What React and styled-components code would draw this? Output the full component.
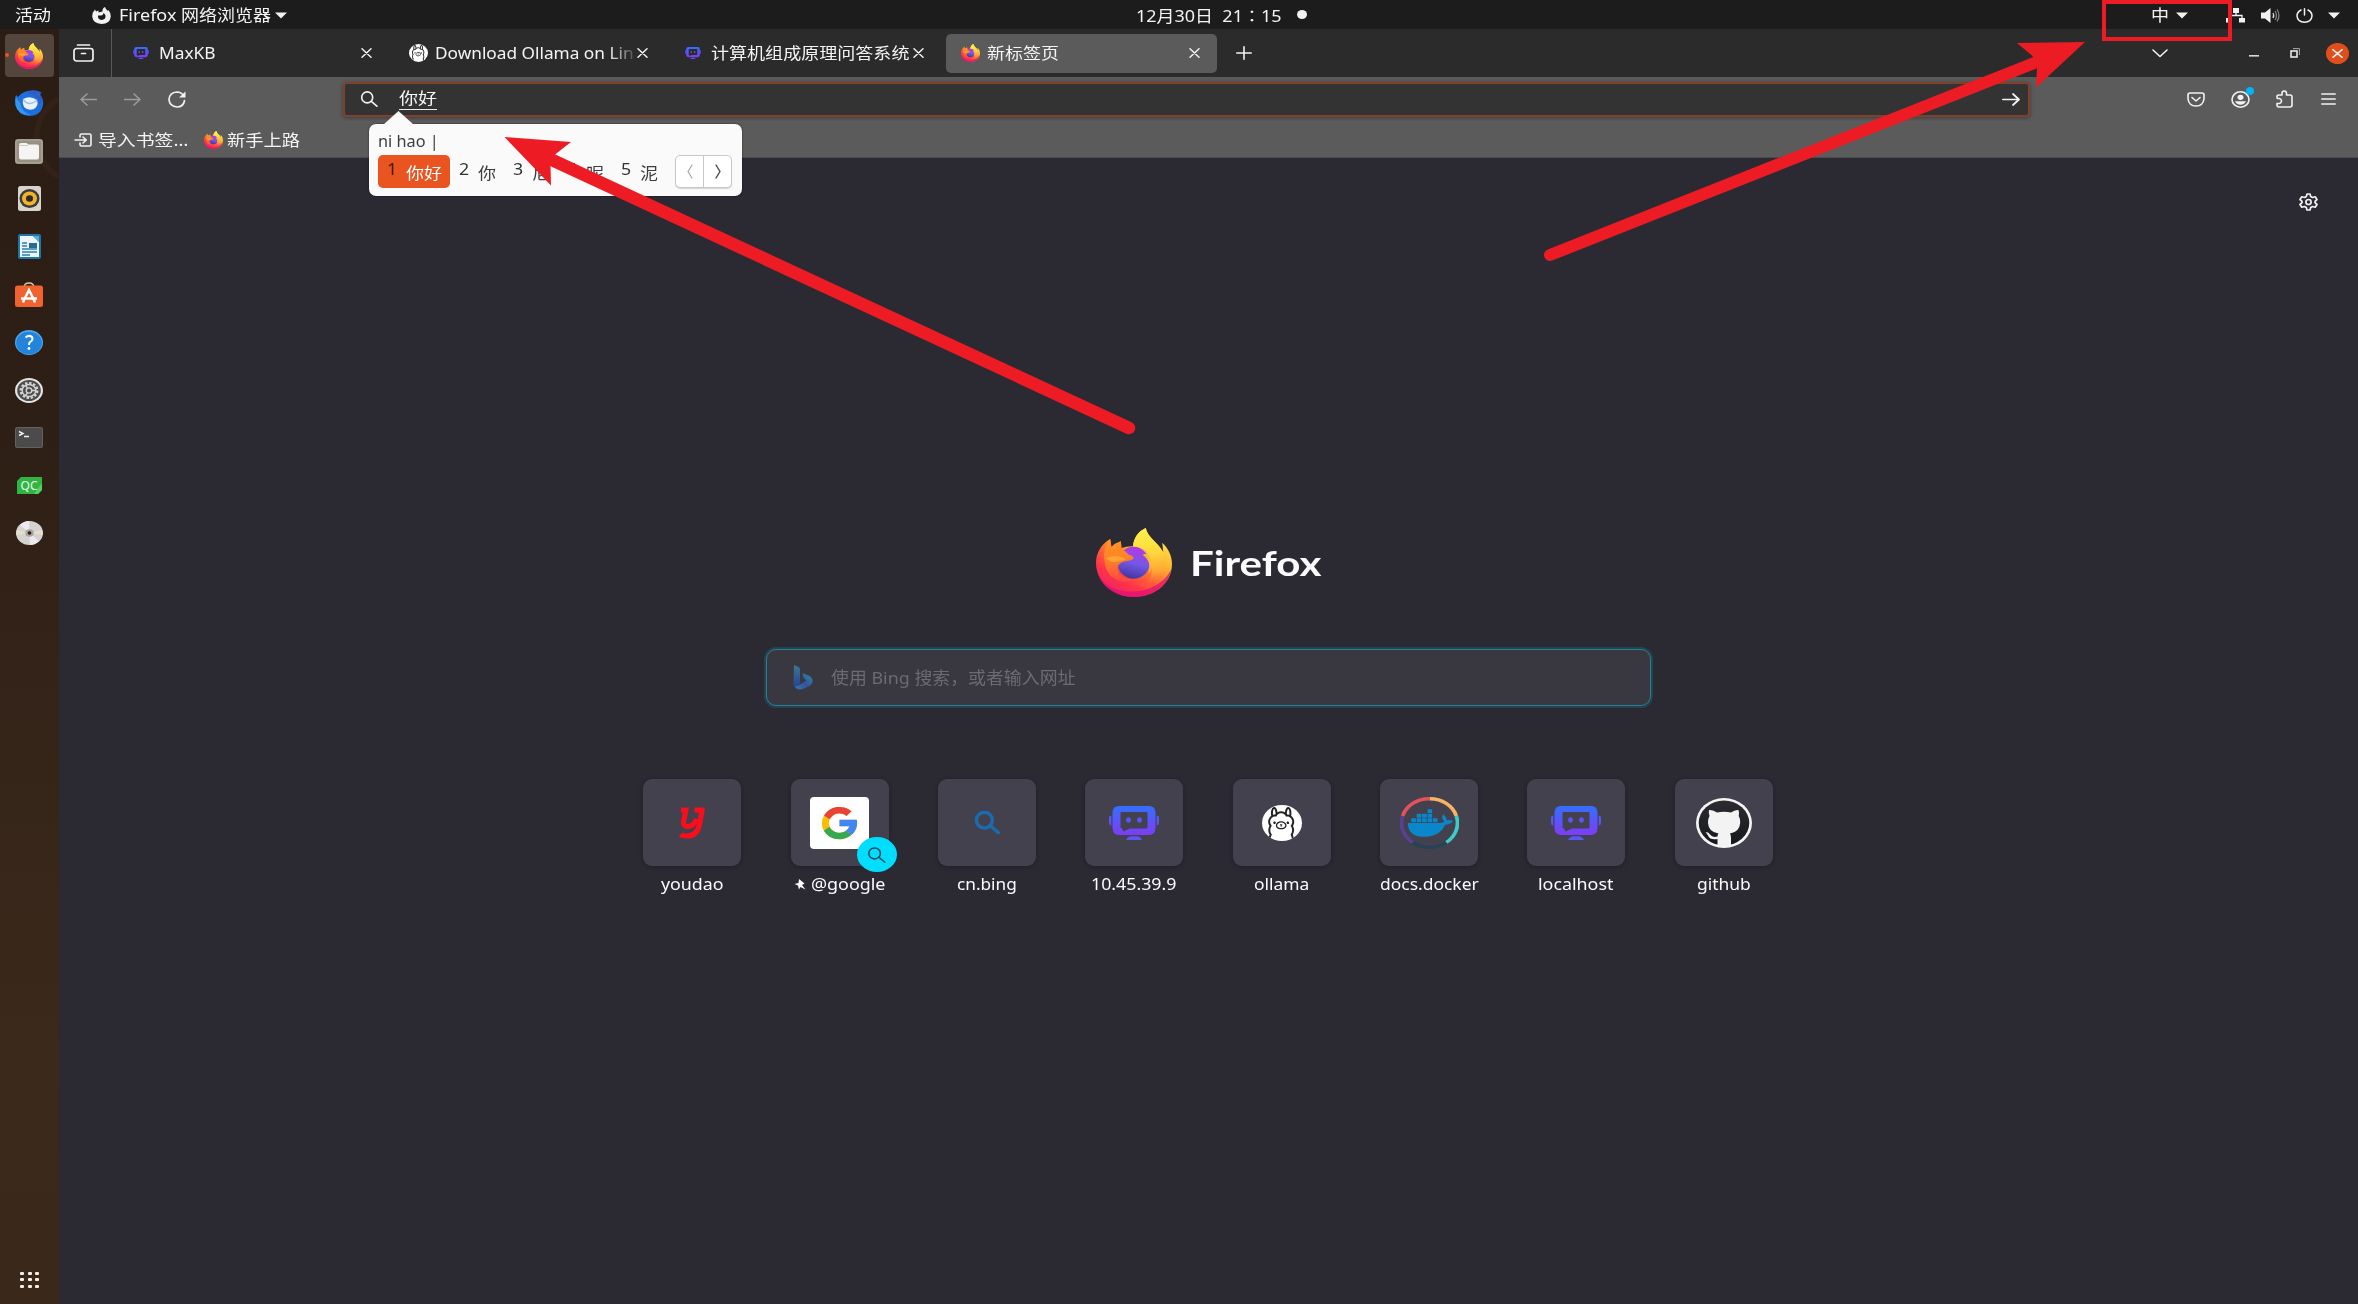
import React, { useLayoutEffect, useRef, useState } from 'react';
import styled, { createGlobalStyle } from 'styled-components';
import { SiOllama } from 'react-icons/si';

const GlobalStyle = createGlobalStyle`
  * { box-sizing: border-box; }
  html, body { margin: 0; padding: 0; background: #2b2a33; overflow: hidden; }
  body { font-family: "Noto Sans", "Noto Sans CJK SC", sans-serif; color: #f4f4f4; }
  svg { display: block; flex: none; }
`;

/* ---------- text fitted to a fixed advance ---------- */
const FitBox = styled.span`
  display: block;
  flex: none;
  width: ${p => p.$w}px;
  line-height: 1;
  font-size: ${p => p.$size}px;
  font-weight: ${p => p.$weight || 400};
  font-family: ${p => p.$family || 'inherit'};
  color: ${p => p.$color || '#f4f4f4'};
  white-space: nowrap;
`;
const FitInner = styled.span`
  display: inline-block;
  line-height: 20px;
  transform-origin: 0 50%;
`;
function Fit({ w, size = 15, children, ...rest }) {
  const ref = useRef(null);
  const [scale, setScale] = useState(1);
  useLayoutEffect(() => {
    const n = ref.current.offsetWidth;
    if (n) setScale(w / n);
  }, [w, size, children]);
  return (
    <FitBox $w={w} $size={size} $weight={rest.weight} $color={rest.color} $family={rest.family}>
      <FitInner ref={ref} style={{ transform: `scaleX(${scale})` }}>{children}</FitInner>
    </FitBox>
  );
}

/* ---------- layout ---------- */
const Screen = styled.div`
  position: relative;
  display: flex;
  flex-direction: column;
  width: 2358px;
  height: 1304px;
  overflow: hidden;
`;
const TopBar = styled.header`
  display: flex;
  align-items: center;
  flex: none;
  height: 29px;
  padding: 1px 18px 0 15px;
  background: #1c1c1c;
`;
const MidColon = styled.span`
  font-family: "Noto Sans CJK TC", sans-serif;
`;
const Spacer = styled.div`
  flex: ${p => (p.$w ? 'none' : 1)};
  width: ${p => (p.$w ? p.$w + 'px' : 'auto')};
`;
const NoticeDot = styled.span`
  width: 10px;
  height: 9px;
  margin: 0 0 1px 15px;
  border-radius: 50%;
  background: #f2f2f2;
`;
const Body = styled.div`
  display: flex;
  flex: 1;
  min-height: 0;
`;
const Dock = styled.nav`
  position: relative;
  display: flex;
  flex-direction: column;
  align-items: center;
  flex: none;
  width: 59px;
  padding: 5px 1px 0 0;
  background: linear-gradient(#2b1d14, #2e1f16 30%, #3b291b 80%, #3a281b);
`;
const DockRing = styled.svg`
  position: absolute;
  left: 0;
  top: 0;
`;
const DockItem = styled.div`
  position: relative;
  display: flex;
  align-items: center;
  justify-content: center;
  flex: none;
  width: 49px;
  height: 43px;
  margin-bottom: 4.8px;
  border-radius: 4px;
  background: ${p => (p.$active ? '#54463d' : 'transparent')};
`;
const RunDot = styled.span`
  position: absolute;
  left: 5px;
  top: 24px;
  width: 4px;
  height: 4px;
  border-radius: 50%;
  background: #e95420;
`;
const AppsGrid = styled.div`
  display: grid;
  grid-template-columns: repeat(3, 4px);
  grid-auto-rows: 3px;
  gap: 3.5px;
  margin: auto 0 16.5px 1px;
`;
const AppsDot = styled.span`
  border-radius: 1px;
  background: #f3eee9;
`;
const Win = styled.main`
  display: flex;
  flex-direction: column;
  flex: 1;
  min-width: 0;
`;
const TabStrip = styled.div`
  display: flex;
  align-items: center;
  flex: none;
  height: 48px;
  padding-right: 9px;
  background: #2b2b2b;
`;
const ViewCell = styled.div`
  display: flex;
  align-items: center;
  width: 53px;
  height: 48px;
  padding-left: 14px;
  margin-right: 6px;
  border-right: 1px solid #5a5a5a;
`;
const Tab = styled.div`
  display: flex;
  align-items: center;
  width: 271px;
  height: 39px;
  margin-right: 5px;
  padding: 0 17px 0 15px;
  border-radius: 5px;
  background: ${p => (p.$active ? '#5b5b5b' : 'transparent')};
`;
const TabIcon = styled.span`
  display: flex;
  align-items: center;
  width: 25.5px;
`;
const TabTitle = styled.span`
  flex: 1;
  min-width: 0;
  overflow: hidden;
  ${p => p.$fade && 'mask-image: linear-gradient(90deg, #000 174px, transparent 204px);'}
`;
const CloseCircle = styled.span`
  display: flex;
  align-items: center;
  justify-content: center;
  width: 23px;
  height: 21px;
  border-radius: 50%;
  background: #e04f1b;
`;
const NavBar = styled.div`
  display: flex;
  align-items: center;
  flex: none;
  height: 44px;
  padding: 0 22px 0 21px;
  background: #5b5b5b;
`;
const UrlBar = styled.div`
  display: flex;
  align-items: center;
  width: 1687px;
  height: 35px;
  padding: 0 8px 0 15px;
  border: 2px solid #7f412b;
  border-radius: 4px;
  background: #333333;
  box-shadow: 0 1px 4px rgba(0, 0, 0, 0.35);
`;
const Composing = styled.span`
  display: block;
  height: 22px;
  padding-top: 0;
  border-bottom: 1.5px solid #eee;
`;
const Account = styled.span`
  position: relative;
`;
const AccountDot = styled.span`
  position: absolute;
  right: -4px;
  top: -4px;
  width: 8px;
  height: 8px;
  border-radius: 50%;
  background: #00b3f4;
`;
const Bookmarks = styled.div`
  display: flex;
  align-items: center;
  flex: none;
  height: 37px;
  padding: 1px 0 0 15px;
  background: #5b5b5b;
  border-bottom: 1px solid #4b4a4f;
`;
const Page = styled.section`
  display: flex;
  flex-direction: column;
  align-items: center;
  flex: 1;
  min-height: 0;
  background: #2b2a33;
`;
const SettingsRow = styled.div`
  display: flex;
  justify-content: flex-end;
  width: 100%;
  height: 370px;
  padding: 35px 40px 0 0;
`;
const Brand = styled.div`
  display: flex;
  align-items: center;
  gap: 18px;
  height: 69px;
`;
const SearchBox = styled.div`
  display: flex;
  align-items: center;
  width: 885px;
  height: 57px;
  margin-top: 52px;
  padding-left: 26px;
  border: 1px solid #298091;
  border-radius: 10px;
  background: #393841;
  box-shadow: 0 0 0 2px #224450;
`;
const Tiles = styled.div`
  display: flex;
  gap: 49.4px;
  margin-top: 73px;
  padding-right: 1px;
`;
const Site = styled.div`
  display: flex;
  flex-direction: column;
  align-items: center;
  width: 98px;
`;
const Tile = styled.div`
  position: relative;
  display: flex;
  align-items: center;
  justify-content: center;
  width: 98px;
  height: 87px;
  border-radius: 9px;
  background: #42414d;
  box-shadow: 0 1px 4px rgba(10, 10, 20, 0.3);
`;
const SiteLabel = styled.div`
  display: flex;
  align-items: center;
  gap: 5px;
  height: 20px;
  margin-top: 8px;
`;
const WhiteCard = styled.div`
  display: flex;
  align-items: center;
  justify-content: center;
  width: 59px;
  height: 52px;
  border-radius: 4px;
  background: #fff;
`;
const SearchBadge = styled.span`
  position: absolute;
  right: -8px;
  bottom: -6px;
  display: flex;
  align-items: center;
  justify-content: center;
  width: 40px;
  height: 35px;
  border-radius: 50%;
  background: #00ddff;
`;
const RoundIcon = styled.span`
  display: flex;
  align-items: flex-end;
  justify-content: center;
  overflow: hidden;
  width: ${p => p.$w}px;
  height: ${p => p.$h}px;
  border-radius: 50%;
  background: #fff;
  color: #222;
`;
const Llama = styled(SiOllama)`
  width: ${p => p.$w}px;
  height: ${p => p.$h}px;
`;

/* ---------- input method popup ---------- */
const Popup = styled.div`
  position: absolute;
  left: 369px;
  top: 124px;
  width: 373px;
  height: 72px;
  padding: 7px 10px 0 9px;
  border-radius: 7px;
  background: #fafafa;
  box-shadow: 0 0 2px rgba(0, 0, 0, 0.6);
`;
const PopupTip = styled.svg`
  position: absolute;
  left: 14px;
  top: -13px;
`;
const Preedit = styled.div`
  height: 24px;
  padding-left: 0;
`;
const Candidates = styled.div`
  display: flex;
  align-items: center;
  height: 33px;
`;
const Candidate = styled.div`
  display: flex;
  align-items: center;
  justify-content: space-between;
  height: 33px;
  width: ${p => p.$w}px;
  margin-right: ${p => p.$mr}px;
  padding: 0 ${p => (p.$on ? '8px 0 9px' : '0')};
  border-radius: 5px;
  background: ${p => (p.$on ? '#e95420' : 'transparent')};
`;
const Digit = styled.span`
  margin-top: -5px;
`;
const Glyphs = styled.span`
  margin-top: 2px;
`;
const Pager = styled.div`
  display: flex;
  width: 57px;
  height: 33px;
  margin-left: auto;
  border: 1px solid #c8c8c8;
  border-radius: 5px;
  background: #fff;
  box-shadow: 0 1px 1px rgba(0, 0, 0, 0.15);
`;
const PageBtn = styled.span`
  display: flex;
  align-items: center;
  justify-content: center;
  flex: 1;
  & + & { border-left: 1px solid #c8c8c8; }
`;
const Marks = styled.svg`
  position: absolute;
  left: 0;
  top: 0;
`;

/* ---------- icons ---------- */
const Line = ({ w, h, vb, sw = 1.6, color = '#f2f2f2', children }) => (
  <svg width={w} height={h} viewBox={vb} preserveAspectRatio="none" fill="none" stroke={color} strokeWidth={sw} strokeLinecap="round" strokeLinejoin="round">{children}</svg>
);
const Caret = () => <svg width="12" height="7" viewBox="0 0 12 7"><path d="M0 .5h12L6 6.5z" fill="#f2f2f2" /></svg>;
const Cross = ({ w = 11, h = 10, sw = 1.5 }) => <Line w={w} h={h} vb="0 0 11 10" sw={sw}><path d="M1 .8l9 8.4M10 .8L1 9.2" /></Line>;
const Magnifier = ({ w, h, color, sw }) => <Line w={w} h={h} vb="0 0 18 16" color={color} sw={sw}><circle cx="7.2" cy="6.4" r="5.5" /><path d="M11.3 10.3l5.6 4.9" /></Line>;

let seq = 0;
function FirefoxLogo({ w, h }) {
  const [id] = useState(() => 'fx' + seq++);
  return (
    <svg width={w} height={h} viewBox="0 0 226 207" preserveAspectRatio="none">
      <defs>
        <linearGradient id={id + 'a'} x1="0.82" y1="0.15" x2="0.25" y2="0.98">
          <stop offset="0" stopColor="#ffe04a" /><stop offset=".3" stopColor="#ffb02e" /><stop offset=".52" stopColor="#ff6b35" /><stop offset=".75" stopColor="#ff3647" /><stop offset="1" stopColor="#f01f66" />
        </linearGradient>
        <linearGradient id={id + 'b'} x1="0.3" y1="0" x2="0.4" y2="1">
          <stop offset="0" stopColor="#fff14f" /><stop offset=".45" stopColor="#ffd93b" /><stop offset=".8" stopColor="#ffa435" /><stop offset="1" stopColor="#ff6a3d" stopOpacity="0" />
        </linearGradient>
        <linearGradient id={id + 'c'} x1="0.6" y1="0" x2="0.35" y2="1">
          <stop offset="0" stopColor="#b935e8" /><stop offset=".5" stopColor="#7558e6" /><stop offset="1" stopColor="#40369c" />
        </linearGradient>
        <linearGradient id={id + 'd'} x1="0.2" y1="0" x2="0.3" y2="1">
          <stop offset="0" stopColor="#ff9420" /><stop offset=".45" stopColor="#ff8427" /><stop offset="1" stopColor="#ff4a42" />
        </linearGradient>
      </defs>
      <path d="M42 33L46 57Q58 45 74 40L76 60Q92 54 110 55C112 30 126 10 148 0C152 28 186 44 200 72L197 44C216 62 226 85 226 108C226 165 175 207 113 207C50 207 0 160 0 105C0 76 14 50 42 33Z" fill={`url(#${id}a)`} />
      <path d="M2 122C14 172 60 192 112 190C165 188 208 160 224 122C216 172 170 207 113 207C55 207 8 170 2 122Z" fill="#e20f78" opacity=".75" />
      <path d="M148 0C152 28 186 44 202 78C212 120 196 160 150 172C172 150 170 100 150 84Q132 60 110 55C112 30 126 10 148 0Z" fill={`url(#${id}b)`} />
      <circle cx="112" cy="104" r="48" fill={`url(#${id}c)`} />
      <path d="M132 62C164 76 176 110 156 138C164 112 158 94 138 80L150 77Q142 68 132 62Z" fill="#ffb936" />
      <path d="M42 33L46 57Q58 45 74 40L75 59Q84 68 98 80Q110 82 112 91C106 99 92 99 80 102C64 108 62 122 66 132C72 148 92 156 112 153C90 168 50 160 34 130C20 100 20 60 42 33Z" fill={`url(#${id}d)`} />
      <path d="M30 90Q50 80 78 88L90 94Q70 104 48 102Q36 98 30 90Z" fill="#ffb03a" opacity=".75" />
    </svg>
  );
}

function Robot({ w, h }) {
  const [id] = useState(() => 'rb' + seq++);
  return (
    <svg width={w} height={h} viewBox="0 0 50 34" preserveAspectRatio="none">
      <defs><linearGradient id={id} x1="0" y1="0" x2="0" y2="1"><stop offset="0" stopColor="#3370ff" /><stop offset="1" stopColor="#7f3bf5" /></linearGradient></defs>
      <path fillRule="evenodd" fill={`url(#${id})`} d="M10 0H40Q46.500 0 46.500 7V22Q46.500 29 40 29H10Q3.500 29 3.500 22V7Q3.500 0 10 0ZM12.500 6Q11.500 6 11.500 7V21.500Q11.500 22.500 13 22.500L14.500 25.500L21 22.500H37.500Q38.500 22.500 38.500 21.500V7Q38.500 6 37.500 6Z" />
      <path fill={`url(#${id})`} d="M0 12Q0 9.500 2.300 9.500V19.500Q0 19.500 0 17ZM50 12Q50 9.500 47.700 9.500V19.500Q50 19.500 50 17Z" />
      <ellipse cx="19.500" cy="14" rx="2.400" ry="2.700" fill="#5855f7" /><ellipse cx="30.500" cy="14" rx="2.400" ry="2.700" fill="#5855f7" />
      <path d="M17 34Q19 30.300 22 30.300H28Q31 30.300 33 34Z" fill="#5b55f6" />
    </svg>
  );
}

function Ollama({ w, h }) {
  return <RoundIcon $w={w} $h={h}><Llama preserveAspectRatio="none" $w={w * 0.86} $h={h * 0.94} /></RoundIcon>;
}

const GoogleG = () => (
  <svg width="37" height="34" viewBox="3 3 42 42" preserveAspectRatio="none">
    <path fill="#fbbc05" d="M43.6 20H24v8h11.3A12 12 0 1 1 32 15.2l5.6-5.7A20 20 0 1 0 44 24c0-1.3-.1-2.7-.4-4z" />
    <path fill="#ea4335" d="M6.3 14.7l6.6 4.8A12 12 0 0 1 32 15.2l5.6-5.7A20 20 0 0 0 6.3 14.7z" />
    <path fill="#34a853" d="M24 44c5.2 0 9.9-2 13.4-5.2l-6.2-5.2A12 12 0 0 1 12.7 28.5l-6.5 5A20 20 0 0 0 24 44z" />
    <path fill="#4285f4" d="M43.6 20H24v8h11.3a12 12 0 0 1-4.1 5.6l6.2 5.2C37 39.2 44 34 44 24c0-1.3-.1-2.7-.4-4z" />
  </svg>
);

const DockerIcon = () => (
  <svg width="59" height="52" viewBox="0 0 60 60" preserveAspectRatio="none">
    <g fill="none" strokeWidth="3.8">
      <path d="M30 2A28 28 0 0 1 57.3 22" stroke="#f9b263" /><path d="M57.3 22A28 28 0 0 1 47 52.5" stroke="#3ecccb" />
      <path d="M47 52.5A28 28 0 0 1 13 52.5" stroke="#254356" /><path d="M13 52.5A28 28 0 0 1 2.7 22" stroke="#5a4093" /><path d="M2.7 22A28 28 0 0 1 30 2" stroke="#e5505c" />
    </g>
    <g fill="#0a87ca">
      <path d="M8 30H40Q44 30 45 28Q41 24 44 20Q47 23 48 27Q51 26 54 28Q51 32 46 32C42 42 34 46 23 46Q8 45 8 30Z" />
      <path d="M11.5 24.5h4.7v4.5h-4.7zM17 24.5h4.7v4.5H17zM22.5 24.5h4.7v4.5h-4.7zM28 24.5h4.7v4.5H28zM33.5 24.5h4.7v4.5h-4.7zM17 19.3h4.7v4.5H17zM22.5 19.3h4.7v4.5h-4.7zM28 19.3h4.7v4.5H28zM28 14h4.7v4.5H28z" />
    </g>
  </svg>
);

const GithubIcon = () => (
  <svg width="56" height="50" viewBox="0 0 56 50" preserveAspectRatio="none">
    <defs><linearGradient id="gh" x1="0" y1="0" x2="0" y2="1"><stop offset="0" stopColor="#2c2c30" /><stop offset="1" stopColor="#15181c" /></linearGradient></defs>
    <ellipse cx="28" cy="25" rx="28" ry="25" fill="#f5f5f5" /><ellipse cx="28" cy="25" rx="25.3" ry="22.4" fill="url(#gh)" />
    <path fill="#f3f3f3" d="M13 12Q17 11.500 21 14.500Q28 12.800 35 14.500Q39 11.500 42.500 12Q43.500 15 42.700 18Q44.500 20.500 44.200 25Q43.500 34 34 35.500Q35 37 35 40V47Q28 49.500 21.500 47V41Q14 42.500 12 37.500Q11 35.500 9.500 34.500Q12 33.500 14 36.500Q16.500 40 21.500 38.500Q21.500 36.500 22.500 35.500Q12.500 34 12 25Q11.800 20.500 13.500 18Q12.300 15 13 12Z" />
  </svg>
);

const YoudaoIcon = () => (
  <svg width="26" height="32" viewBox="0 0 26 32">
    <g fill="none" stroke="#fc0d1b">
      <path d="M2 3H6.800Q5.500 10 4.600 14.500Q4 20 9.500 19.500Q15.500 18.500 17.500 12" strokeWidth="5.200" />
      <path d="M15.500 3H23Q22 11 20 19Q17.500 29 8 29Q3.500 29 1.500 27.500" strokeWidth="5.200" />
    </g>
  </svg>
);

const BingIcon = () => (
  <svg width="20" height="25" viewBox="0 0 20 25" preserveAspectRatio="none">
    <defs>
      <linearGradient id="bg1" x1="0" y1="0" x2="0" y2="1"><stop offset="0" stopColor="#3b7796" /><stop offset="1" stopColor="#263f92" /></linearGradient>
      <linearGradient id="bg2" x1="1" y1="0" x2="0" y2="1"><stop offset="0" stopColor="#2a8f9c" /><stop offset=".55" stopColor="#30549f" /><stop offset="1" stopColor="#3477a5" /></linearGradient>
    </defs>
    <path d="M1 0L6 2.200Q7 3 7 4.500V18.500L3.500 23.500Q.5 22 .5 18Z" fill="url(#bg1)" />
    <path d="M9.500 8L16 10.800Q20 13 19.500 17Q19 20 14 22Q8 26 3.500 23.500Q2 22.500 2.500 21Q5 21 7 19.500L13.500 15.500L12 14.500Q9.500 12 9.500 8Z" fill="url(#bg2)" />
  </svg>
);

const dockIcons = [
  <FirefoxLogo w={28} h={26} />,
  <svg width="29" height="26" viewBox="0 0 29 26">
    <path d="M1 5L3 7Q7 2 13 1Q22-1 27 3Q24 3.500 26 6Q29 10 28 15Q26 26 14 26Q3 25 .5 15Q0 9 1 5Z" fill="#1c6fdc" />
    <path d="M12 3Q20-1 26 3Q22 4 18 5Q25 8 25 15Q28 10 26 6" fill="#3659c4" />
    <path d="M1 5Q1 9 4 11Q6 14 6 17Q9 23 16 25Q3 26 .5 15Q0 9 1 5Z" fill="#3596ee" />
    <path d="M8 9Q15 5 22 10Q24 16 19 19Q13 21 9 17Q7 13 8 9Z" fill="#e9f1fb" />
    <path d="M8 9.500Q14 17 22 10.500" fill="none" stroke="#9fc0e6" strokeWidth="1.300" />
  </svg>,
  <svg width="28" height="25" viewBox="0 0 28 25"><rect width="28" height="25" rx="3" fill="#989182" /><rect x="1" y="1" width="26" height="23" rx="2.5" fill="none" stroke="#b2ac9d" /><path d="M4 6Q4 4 6 4H11Q12.500 4 13 5.500H22Q24 5.500 24 7.500V18Q24 20.500 22 20.500H6Q4 20.500 4 18Z" fill="#f6f4f2" /><path d="M4 6.500H13" stroke="#cfc9c0" /></svg>,
  <svg width="23" height="25" viewBox="0 0 23 25"><rect width="23" height="25" rx="2.5" fill="#d9d4cb" /><ellipse cx="11.5" cy="12.5" rx="10" ry="9.5" fill="#3b3b3b" /><ellipse cx="11.5" cy="12.5" rx="7.5" ry="7" fill="#f0b429" /><ellipse cx="11.5" cy="12.5" rx="3.5" ry="3.2" fill="#2b2b2b" /></svg>,
  <svg width="23" height="25" viewBox="0 0 23 25"><rect width="23" height="25" rx="2" fill="#1c76a8" /><path d="M2 2H15L21 8V23H2Z" fill="#eef5fa" /><path d="M15 2L21 8V2Z" fill="#55b2e0" /><path d="M4 9H9M4 12H9M4 15H19M4 18H19M4 21H12" stroke="#2b7fae" strokeWidth="1.3" /><rect x="11" y="9" width="8" height="5" fill="#2a6a92" /></svg>,
  <svg width="28" height="25" viewBox="0 0 28 25"><path d="M9 6Q9 1 14 1Q19 1 19 6" fill="none" stroke="#e3c59a" strokeWidth="1.5" /><rect y="3.5" width="28" height="21.5" rx="2.5" fill="#f0622f" /><path d="M9 18L14 8L19 18M6 16.500H22M8 20.500L9 18M20 20.500L19 18" fill="none" stroke="#fff" strokeWidth="2.5" /></svg>,
  <svg width="28" height="25" viewBox="0 0 28 25"><ellipse cx="14" cy="12.5" rx="14" ry="12.5" fill="#4fa9ee" /><ellipse cx="14" cy="13" rx="12.8" ry="11.2" fill="#2284dc" /><path d="M10.500 7.500Q14 4.500 17 7Q18.500 10 15 12Q14 13 14 15" fill="none" stroke="#fff" strokeWidth="2" /><circle cx="14" cy="18.5" r="1.4" fill="#fff" /></svg>,
  <svg width="28" height="25" viewBox="0 0 28 25"><ellipse cx="14" cy="12.5" rx="14" ry="12.5" fill="#e3e3e3" /><ellipse cx="14" cy="12.5" rx="11.8" ry="10.5" fill="#4d4d4d" /><ellipse cx="14" cy="12.5" rx="8.3" ry="7.4" fill="none" stroke="#d4d4d4" strokeWidth="2.4" strokeDasharray="2.4 1.7" /><ellipse cx="14" cy="12.5" rx="6.8" ry="6.1" fill="none" stroke="#d4d4d4" strokeWidth="1.5" /><ellipse cx="14" cy="12.5" rx="2.8" ry="2.6" fill="none" stroke="#d4d4d4" strokeWidth="1.4" /><path d="M16.500 12.500H20M12.500 10L10.500 7.500M12.500 15L10.500 17.500" stroke="#d4d4d4" strokeWidth="1.3" /></svg>,
  <svg width="28" height="21" viewBox="0 0 28 21"><rect width="28" height="21" rx="2" fill="#4b4b4b" /><rect x=".5" y=".5" width="27" height="20" rx="2" fill="none" stroke="#626262" /><path d="M4 4.500L8 6.500L4 8.500M9 9.500H14" fill="none" stroke="#f2f2f2" strokeWidth="1.4" /></svg>,
  <svg width="25" height="17" viewBox="0 0 25 17"><path d="M4 0H25V13L21 17H0V4Z" fill="#30b443" /><path d="M17 17L25 6V13L21 17Z" fill="#53d264" /><text x="3.5" y="13" fontSize="12" textLength="17" lengthAdjust="spacingAndGlyphs" fill="#e8ffe9" fontFamily="Noto Sans, sans-serif">QC</text></svg>,
  <svg width="27" height="24" viewBox="0 0 27 24"><ellipse cx="13.5" cy="12" rx="13.5" ry="12" fill="#d5d3d1" /><path d="M13.500 12L4 4Q8 0 13 0ZM13.500 12L23 20Q19 24 14 24Z" fill="#eceaf0" /><path d="M13.500 12L1 9L0 14ZM13.500 12L26 9L27 14Z" fill="#e6dfcb" /><ellipse cx="13.5" cy="12" rx="4.2" ry="3.7" fill="#a8a5a0" /><ellipse cx="13.5" cy="12" rx="1.9" ry="1.7" fill="#2c2018" /></svg>,
];

const tabs = [
  { title: 'MaxKB', w: 57, icon: <Robot w={16} h={12} /> },
  { title: 'Download Ollama on Lin', w: 198, fade: true, icon: <Ollama w={19} h={18} /> },
  { title: '计算机组成原理问答系统', w: 199, icon: <Robot w={16} h={12} /> },
  { title: '新标签页', w: 72, active: true, icon: <FirefoxLogo w={19} h={18} /> },
];

const sites = [
  { label: 'youdao', w: 62, icon: <YoudaoIcon /> },
  {
    label: '@google', w: 75, pin: true,
    icon: <><WhiteCard><GoogleG /></WhiteCard><SearchBadge><Magnifier w={19} h={16} color="#15475a" sw={1.5} /></SearchBadge></>,
  },
  { label: 'cn.bing', w: 60, icon: <Magnifier w={26} h={23} color="#1b6bb0" sw={2.4} /> },
  { label: '10.45.39.9', w: 86, icon: <Robot w={50} h={34} /> },
  { label: 'ollama', w: 55, icon: <Ollama w={40} h={36} /> },
  { label: 'docs.docker', w: 99, icon: <DockerIcon /> },
  { label: 'localhost', w: 76, icon: <Robot w={50} h={34} /> },
  { label: 'github', w: 54, icon: <GithubIcon /> },
];

const candidates = [
  { n: '1', t: '你好', w: 72, tw: 36, mr: 9, on: true },
  { n: '2', t: '你', w: 37, tw: 18, mr: 17 },
  { n: '3', t: '尼', w: 37, tw: 18, mr: 17 },
  { n: '4', t: '呢', w: 37, tw: 18, mr: 17 },
  { n: '5', t: '泥', w: 37, tw: 18, mr: 0 },
];

export default function App() {
  return (
    <Screen>
      <GlobalStyle />
      <TopBar>
        <Fit w={36} size={15.5}>活动</Fit>
        <Spacer $w={41} />
        <svg width="19" height="17" viewBox="0 0 19 17"><path fillRule="evenodd" fill="#f2f2f2" d="M3 2.500L4 4.500L6.500 3.500V5.500L10.500 4.500Q10 1.500 13 0Q13.500 2.500 16 4L16.500 3Q19 6 18.800 9.500Q18 17 9.500 17Q1 16.500 .2 9.500Q0 5.500 3 2.500ZM6 8.500Q5.500 12.500 9.500 13Q14 12.500 13.500 8.500Q12.500 6 11 6.200Q12 7.500 9.500 8.500Z" /></svg>
        <Spacer $w={8} />
        <Fit w={152} size={15.5}>Firefox 网络浏览器</Fit>
        <Spacer $w={4} />
        <Caret />
        <Spacer $w={849} />
        <Fit w={146} size={15.5}>12月30日&nbsp; 21<MidColon>：</MidColon>15</Fit>
        <NoticeDot />
        <Spacer />
        <Fit w={18} size={16}>中</Fit>
        <Spacer $w={7} />
        <Caret />
        <Spacer $w={38} />
        <svg width="19" height="15" viewBox="0 0 19 15"><path d="M7 0h6v5h-6zM0 10h6v4.500H0zM13 10h6v4.500h-6z" fill="#f2f2f2" /><path d="M10 5V7.500M3 10V7.500H16V10" fill="none" stroke="#f2f2f2" strokeWidth="1.3" /></svg>
        <Spacer $w={16} />
        <svg width="19" height="15" viewBox="0 0 19 15"><path d="M0 4.500H4L9.500 0V15L4 10.500H0Z" fill="#f2f2f2" /><path d="M12 5Q13.500 7.500 12 10" stroke="#ddd" fill="none" strokeWidth="1.3" /><path d="M14 3Q17 7.500 14 12M16 1.500Q20 7.500 16 13.500" stroke="#888" fill="none" strokeWidth="1.2" /></svg>
        <Spacer $w={16} />
        <Line w={17} h={15} vb="0 0 17 15" sw={1.5}><path d="M5 2Q1 4 1 8Q1.500 14 8.500 14.200Q15.500 14 16 8Q16 4 12 2M8.500 .8V7" /></Line>
        <Spacer $w={15} />
        <Caret />
      </TopBar>

      <Body>
        <Dock>
          <DockRing width="59" height="200" viewBox="0 0 59 200" fill="none"><path d="M59 70A45 45 0 0 0 59 148" stroke="#38231a" strokeWidth="6" opacity=".7" /></DockRing>
          {dockIcons.map((icon, i) => (
            <DockItem key={i} $active={i === 0}>{icon}</DockItem>
          ))}
          <RunDot />
          <AppsGrid>{Array.from({ length: 9 }, (_, i) => <AppsDot key={i} />)}</AppsGrid>
        </Dock>

        <Win>
          <TabStrip>
            <ViewCell>
              <Line w={21} h={18} vb="0 0 21 18" sw={1.7}><path d="M4.500 1H16.500" /><rect x="1" y="4.5" width="19" height="12.5" rx="2.5" /><path d="M8.500 9.500H12.500" /></Line>
            </ViewCell>
            {tabs.map(t => (
              <Tab key={t.title} $active={t.active}>
                <TabIcon>{t.icon}</TabIcon>
                <TabTitle $fade={t.fade}><Fit w={t.w} size={15.5}>{t.title}</Fit></TabTitle>
                <Cross />
              </Tab>
            ))}
            <Spacer $w={14} />
            <Line w={16} h={14} vb="0 0 16 14" sw={1.6}><path d="M8 .8V13.200M.8 7H15.200" /></Line>
            <Spacer />
            <Line w={16} h={9} vb="0 0 16 9" sw={1.6}><path d="M1 1L8 7.500L15 1" /></Line>
            <Spacer $w={81} />
            <svg width="10" height="10" viewBox="0 0 10 10"><path d="M0 7.800H10" stroke="#d8d8d8" strokeWidth="1.6" /></svg>
            <Spacer $w={31} />
            <svg width="10" height="10" viewBox="0 0 10 10" fill="none" stroke="#e8e8e8"><rect x="1" y="3" width="6" height="6" strokeWidth="1.6" /><path d="M3 .6H9.400V7" strokeWidth="1" stroke="#aaa" /></svg>
            <Spacer $w={26} />
            <CloseCircle><Cross w={11} h={9} sw={1.8} /></CloseCircle>
          </TabStrip>

          <NavBar>
            <Line w={17} h={13} vb="0 0 17 13" color="#9b9b9b"><path d="M16.500 6.500H1M7 1L1 6.500L7 12" /></Line>
            <Spacer $w={27} />
            <Line w={17} h={13} vb="0 0 17 13" color="#9b9b9b"><path d="M.5 6.500H16M10 1L16 6.500L10 12" /></Line>
            <Spacer $w={27} />
            <Line w={18} h={17} vb="0 0 18 17" sw={1.7}><path d="M16.500 9.500Q15.500 16 9 16Q1.500 15.500 1 8.500Q1.500 1.500 9 1Q13.500 1.200 16 5" /><path d="M17.500 .5V6.500H11Z" fill="#f2f2f2" stroke="none" /></Line>
            <Spacer $w={157} />
            <UrlBar>
              <Magnifier w={18} h={16} sw={1.6} />
              <Spacer $w={21} />
              <Composing><Fit w={38} size={16}>你好</Fit></Composing>
              <Spacer />
              <Line w={18} h={13} vb="0 0 18 13" sw={1.7}><path d="M.8 6.500H17M11 1L17 6.500L11 12" /></Line>
            </UrlBar>
            <Spacer />
            <Line w={18} h={15} vb="0 0 18 15"><path d="M3 1H15Q17 1 17 3V7Q16 14 9 14Q2 14 1 7V3Q1 1 3 1ZM5 5.500L9 9L13 5.500" /></Line>
            <Spacer $w={26} />
            <Account>
              <Line w={19} h={17} vb="0 0 19 17"><ellipse cx="9.5" cy="8.5" rx="8.5" ry="7.7" /><ellipse cx="9.5" cy="6.3" rx="3" ry="2.6" fill="#f2f2f2" stroke="none" /><path d="M4 10.300H15Q13.500 13.700 9.500 13.700Q5.500 13.700 4 10.300Z" fill="#f2f2f2" stroke="none" /></Line>
              <AccountDot />
            </Account>
            <Spacer $w={26} />
            <Line w={17} h={18} vb="0 0 17 18"><path d="M1 8V6.500Q1 5 3 5H6V3.500Q6 1 8.200 1Q10.500 1 10.500 3.500V5H14Q16 5 16 7V15Q16 17 14 17H3Q1 17 1 15V13.500H3.500Q5.500 13 5.500 11Q5.500 9 3.500 8.500H1.500" /></Line>
            <Spacer $w={28} />
            <Line w={15} h={12} vb="0 0 15 12" sw={1.5}><path d="M.8 1H14.200M.8 6H14.200M.8 11H14.200" /></Line>
          </NavBar>

          <Bookmarks>
            <Line w={18} h={14} vb="0 0 18 14" sw={1.6}><path d="M6 4V2.500Q6 1 7.500 1H15.500Q17 1 17 2.500V11.500Q17 13 15.500 13H7.500Q6 13 6 11.500V10M1 7H12M9 4L12.300 7L9 10" /></Line>
            <Spacer $w={6} />
            <Fit w={90} size={15.5}>导入书签…</Fit>
            <Spacer $w={16} />
            <FirefoxLogo w={19} h={18} />
            <Spacer $w={4} />
            <Fit w={73} size={15.5}>新手上路</Fit>
          </Bookmarks>

          <Page>
            <SettingsRow>
              <Line w={19} h={18} vb="0 0 19 18" sw={1.7}>
                <path d="M8 1H11L11.700 3.500L13.500 4.500L16.200 3.800L18 6.500L16 8.300V9.700L18 11.500L16.200 14.200L13.500 13.500L11.700 14.500L11 17H8L7.300 14.500L5.500 13.500L2.800 14.200L1 11.500L3 9.700V8.300L1 6.500L2.800 3.800L5.500 4.500L7.300 3.500Z" /><ellipse cx="9.5" cy="9" rx="2.6" ry="2.5" />
              </Line>
            </SettingsRow>
            <Brand>
              <FirefoxLogo w={76} h={69} />
              <Fit w={131} size={35} weight={700} color="#fbfbfe" family='"Lato", "Noto Sans", sans-serif'>Firefox</Fit>
            </Brand>
            <SearchBox>
              <BingIcon />
              <Spacer $w={18} />
              <Fit w={244} size={16.5} color="#6b6a75">使用 Bing 搜索，或者输入网址</Fit>
            </SearchBox>
            <Tiles>
              {sites.map(s => (
                <Site key={s.label}>
                  <Tile>{s.icon}</Tile>
                  <SiteLabel>
                    {s.pin && <svg width="12" height="11" viewBox="0 0 11 11"><path d="M4.500 0L10 4.500L7.500 6L11 10.500L6 8L4.500 10.500L3.500 6.500L0 5L4 4Z" fill="#fbfbfe" /></svg>}
                    <Fit w={s.w} size={15.5} color="#fbfbfe">{s.label}</Fit>
                  </SiteLabel>
                </Site>
              ))}
            </Tiles>
          </Page>
        </Win>
      </Body>

      <Popup>
        <PopupTip width="32" height="14" viewBox="0 0 32 14"><path d="M0 14L15.500 0L31 14Z" fill="#fafafa" /></PopupTip>
        <Preedit><Fit w={61} size={16} color="#3d3d3d">ni hao |</Fit></Preedit>
        <Candidates>
          {candidates.map(c => (
            <Candidate key={c.n} $w={c.w} $mr={c.mr} $on={c.on}>
              <Digit><Fit w={10} size={16} color={c.on ? '#40190a' : '#333'}>{c.n}</Fit></Digit>
              <Glyphs><Fit w={c.tw} size={16} color={c.on ? '#fff' : '#3d3d3d'}>{c.t}</Fit></Glyphs>
            </Candidate>
          ))}
          <Pager>
            <PageBtn><Line w={6} h={15} vb="0 0 6 15" color="#a5a5a5" sw={1.2}><path d="M5 1L1 7.500L5 14" /></Line></PageBtn>
            <PageBtn><Line w={6} h={15} vb="0 0 6 15" color="#444" sw={1.4}><path d="M1 1L5 7.500L1 14" /></Line></PageBtn>
          </Pager>
        </Candidates>
      </Popup>

      <Marks width="2358" height="460" viewBox="0 0 2358 460" fill="#ed1c24">
        <rect x="2104" y="2" width="126" height="37" fill="none" stroke="#ed1c24" strokeWidth="4" />
        <path d="M504.500 137L571 142L555 154.500L550.500 165L551 185.500Z" />
        <path d="M550 159L1129 428" stroke="#ed1c24" strokeWidth="12.5" strokeLinecap="round" />
        <path d="M2085 42L2017 43L2032.500 56L2037 68L2036 87.500Z" />
        <path d="M2038 61.500L1550 255" stroke="#ed1c24" strokeWidth="12" strokeLinecap="round" />
      </Marks>
    </Screen>
  );
}
